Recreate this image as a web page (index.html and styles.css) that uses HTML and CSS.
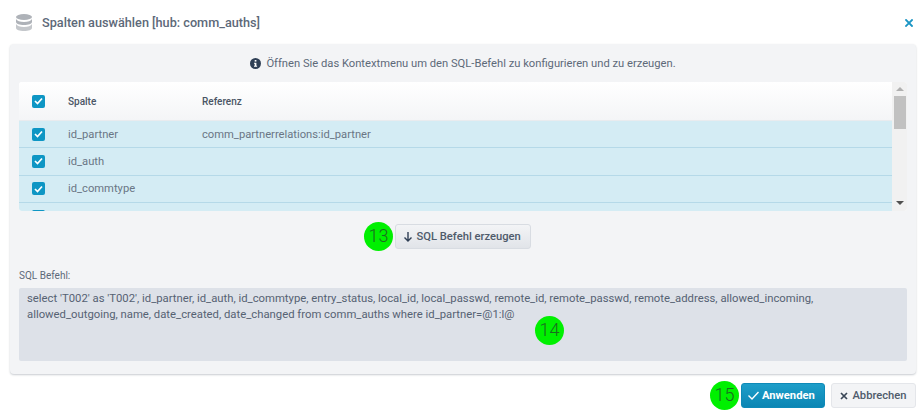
FILE: index.html
```html
<!DOCTYPE html>
<html lang="de">
<head>
<meta charset="utf-8">
<title>Spalten auswählen</title>
<link rel="stylesheet" href="styles.css">
</head>
<body>
<div class="dialog">
  <header class="head">
    <svg class="db" width="16" height="17" viewBox="0 0 16 17"><ellipse cx="8" cy="3" rx="8" ry="3" fill="#aeb2b8"/><path d="M0 5c1 2 4 3 8 3s7-1 8-3v3c0 1.700-3.600 3-8 3S0 9.700 0 8z" fill="#aeb2b8"/><path d="M0 10c1 2 4 3 8 3s7-1 8-3v4c0 1.700-3.600 3-8 3s-8-1.300-8-3z" fill="#c4c7cb"/></svg>
    <h1 class="title">Spalten auswählen [hub: comm_auths]</h1>
    <svg class="close" width="8" height="8" viewBox="0 0 8 8"><path d="M1 1l6 6M7 1L1 7" stroke="#1b95c4" stroke-width="1.800" stroke-linecap="square"/></svg>
  </header>
  <main class="panel">
    <p class="notice"><svg class="info" width="11" height="11" viewBox="0 0 11 11"><circle cx="5.500" cy="5.500" r="5.500" fill="#2f3f55"/><rect x="4.700" y="2" width="1.700" height="1.600" fill="#fff"/><path d="M4 4.700h2.400v3h.7v1H4v-1h.7v-2H4z" fill="#fff"/></svg>Öffnen Sie das Kontextmenu um den SQL-Befehl zu konfigurieren und zu erzeugen.</p>
    <section class="grid">
      <div class="rows">
        <div class="row row-head">
          <span class="cell-check"><span class="check"><svg width="9" height="8" viewBox="0 0 9 8"><path d="M1 4l2.500 2.500L8 1.500" fill="none" stroke="#fff" stroke-width="1.700"/></svg></span></span>
          <span class="cell-name">Spalte</span><span class="cell-ref">Referenz</span>
        </div>
        <div class="row">
          <span class="cell-check"><span class="check"><svg width="9" height="8" viewBox="0 0 9 8"><path d="M1 4l2.500 2.500L8 1.500" fill="none" stroke="#fff" stroke-width="1.700"/></svg></span></span>
          <span class="cell-name">id_partner</span><span class="cell-ref">comm_partnerrelations:id_partner</span>
        </div>
        <div class="row">
          <span class="cell-check"><span class="check"><svg width="9" height="8" viewBox="0 0 9 8"><path d="M1 4l2.500 2.500L8 1.500" fill="none" stroke="#fff" stroke-width="1.700"/></svg></span></span>
          <span class="cell-name">id_auth</span><span class="cell-ref"></span>
        </div>
        <div class="row">
          <span class="cell-check"><span class="check"><svg width="9" height="8" viewBox="0 0 9 8"><path d="M1 4l2.500 2.500L8 1.500" fill="none" stroke="#fff" stroke-width="1.700"/></svg></span></span>
          <span class="cell-name">id_commtype</span><span class="cell-ref"></span>
        </div>
        <div class="row">
          <span class="cell-check"><span class="check"></span></span>
          <span class="cell-name"></span><span class="cell-ref"></span>
        </div>
      </div>
      <div class="scrollbar">
        <span class="arrow-up"></span>
        <span class="thumb"></span>
        <span class="arrow-down"></span>
      </div>
    </section>
    <div class="generate">
      <span class="marker-wrap"><span class="marker marker-13">13</span>
      <button class="btn btn-plain"><svg width="10" height="11" viewBox="0 0 10 11"><path d="M5 1v9M1.500 6.500L5 10l3.500-3.500" fill="none" stroke="#2f3f55" stroke-width="1.400"/></svg>SQL Befehl erzeugen</button></span>
    </div>
    <label class="sql-label">SQL Befehl:</label>
    <div class="sql-wrap">
      <div class="sql">select 'T002' as 'T002', id_partner, id_auth, id_commtype, entry_status, local_id, local_passwd, remote_id, remote_passwd, remote_address, allowed_incoming, allowed_outgoing, name, date_created, date_changed from comm_auths where id_partner=@1:l@</div>
      <span class="marker marker-14">14</span>
    </div>
  </main>
  <footer class="foot">
    <span class="marker-wrap"><span class="marker marker-15">15</span>
    <button class="btn btn-primary"><svg width="11" height="9" viewBox="0 0 11 9"><path d="M.5 4.500L4 8l6.500-7" fill="none" stroke="#fff" stroke-width="1.400"/></svg>Anwenden</button></span>
    <button class="btn btn-cancel"><svg width="8" height="8" viewBox="0 0 8 8"><path d="M1 1l6 6M7 1L1 7" stroke="#3a4656" stroke-width="1.700"/></svg>Abbrechen</button>
  </footer>
</div>
</body>
</html>
```
FILE: styles.css
```css
* { box-sizing: border-box; }
html, body { margin: 0; padding: 0; }
body {
  width: 924px;
  height: 412px;
  overflow: hidden;
  background: #fff;
  font-family: Roboto, "Liberation Sans", sans-serif;
  font-size: 11.2px;
  color: #566273;
}
.dialog { display: flex; flex-direction: column; height: 412px; }
.head {
  height: 44px;
  flex: none;
  display: flex;
  align-items: center;
  padding: 1px 11px 0 16px;
}
.db { flex: none; }
.title {
  margin: 0 0 0 10px;
  font-size: 12.7px;
  font-weight: 500;
  color: #5d6979;
  flex: 1;
}
.close { flex: none; margin-top: 1px; }
.panel {
  width: 906px;
  height: 330px;
  margin-left: 10px;
  flex: none;
  background: #f3f4f6;
  border-radius: 4px;
  box-shadow: 0 1px 2px rgba(40, 50, 70, .25);
  padding: 0 9px;
  display: flex;
  flex-direction: column;
}
.notice {
  margin: 0;
  height: 38px;
  flex: none;
  display: flex;
  align-items: center;
  justify-content: center;
  gap: 5px;
  font-size: 11.2px;
  color: #5d6979;
}
.info { flex: none; }
.grid {
  height: 129px;
  flex: none;
  display: flex;
  background: #fff;
  border-radius: 3px;
  overflow: hidden;
}
.rows { flex: 1; overflow: hidden; min-width: 0; }
.row {
  height: 27.300px;
  display: flex;
  align-items: center;
  background: #d4ecf4;
  border-bottom: 1px solid #b5d9e8;
  font-size: 11.2px;
  color: #6a7685;
}
.row-head {
  height: 39px;
  background: linear-gradient(#fff, #f4f5f7);
  border-bottom: 1px solid #e9ebee;
  font-size: 10px;
  font-weight: 500;
  color: #4a5565;
}
.cell-check { width: 49px; flex: none; padding-left: 13px; display: flex; }
.cell-name { width: 134px; flex: none; }
.cell-ref { flex: 1; }
.check {
  width: 13px;
  height: 13px;
  border-radius: 2px;
  background: #0e96c4;
  display: flex;
  align-items: center;
  justify-content: center;
}
.scrollbar {
  width: 15px;
  flex: none;
  background: #f1f1f1;
  display: flex;
  flex-direction: column;
  align-items: center;
}
.arrow-up, .arrow-down { width: 0; height: 0; border-left: 4px solid transparent; border-right: 4px solid transparent; }
.arrow-up { margin-top: 5px; border-bottom: 4px solid #b0b0b0; }
.thumb { width: 12px; height: 33px; margin-top: 5px; background: #c1c1c1; }
.arrow-down { margin-top: auto; margin-bottom: 6px; border-top: 4px solid #505050; }
.generate {
  height: 50px;
  flex: none;
  display: flex;
  align-items: center;
  justify-content: center;
  padding-top: 1px;
}
.marker-wrap { position: relative; display: inline-flex; }
.btn {
  height: 25px;
  border-radius: 3px;
  font-family: inherit;
  font-size: 11.2px;
  font-weight: 500;
  display: inline-flex;
  align-items: center;
  gap: 4px;
  padding: 0;
  justify-content: center;
}
.btn-plain {
  width: 136px;
  color: #4f5b6b;
  justify-content: flex-start;
  padding-left: 7px;
  gap: 3.500px;
  background: linear-gradient(#f3f4f6, #e1e4e9);
  border: 1px solid #d8dce2;
}
.sql-label {
  margin-top: 9px;
  height: 18px;
  flex: none;
  font-size: 10px;
  line-height: 12px;
  color: #5d6979;
}
.sql-wrap { position: relative; height: 73px; flex: none; }
.sql {
  height: 100%;
  background: #dde1e8;
  border-radius: 2px;
  padding: 3px 8px 0;
  line-height: 16px;
  font-size: 11.300px;
  color: #566273;
}
.foot {
  flex: 1;
  display: flex;
  justify-content: flex-end;
  align-items: flex-start;
  gap: 6px;
  padding: 9px 8px 0 0;
}
.btn-primary {
  width: 84px;
  color: #fff;
  font-weight: 700;
  justify-content: flex-start;
  padding-left: 6px;
  gap: 3px;
  background: linear-gradient(#1d9ec9, #0c86b4);
  border: 1px solid #0e8ab8;
}
.btn-cancel {
  width: 85px;
  color: #4f5b6b;
  background: #f3f4f6;
  border: 1px solid #e4e6ea;
}
.marker {
  position: absolute;
  width: 29px;
  height: 29px;
  padding-bottom: 2px;
  border-radius: 50%;
  background: #00f000;
  color: #1c6a20;
  font-size: 18px;
  font-weight: 300;
  display: flex;
  align-items: center;
  justify-content: center;
}
.marker-13 { left: -31px; top: -2px; }
.marker-14 { left: 516px; top: 28px; }
.marker-15 { left: -31px; top: -2px; }
```
